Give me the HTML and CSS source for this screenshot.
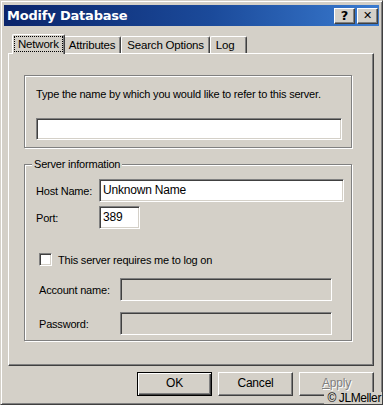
FILE: index.html
```html
<!DOCTYPE html>
<html lang="en">
  <head>
    <meta charset="UTF-8" />
    <meta name="viewport" content="width=device-width, initial-scale=1.0" />
    <title>Modify Database</title>
    <link rel="stylesheet" href="styles.css">
  </head>
  <body>
    <div class="window">
      <div class="titlebar">
        <span class="title">Modify Database</span>
        <div class="title-buttons">
          <div class="tbtn">?</div>
          <div class="tbtn close">&#x2715;</div>
        </div>
      </div>

      <div class="content">
        <div class="tabs">
          <div class="tab active"><span class="focus">Network</span></div>
          <div class="tab">Attributes</div>
          <div class="tab">Search Options</div>
          <div class="tab log">Log</div>
        </div>

        <div class="panel">
          <div class="group intro">
            <p>Type the name by which you would like to refer to this server.</p>
            <div class="field wide"></div>
          </div>

          <fieldset class="group server">
            <legend>Server information</legend>
            <div class="row host">
              <label class="label-short">Host Name:</label>
              <div class="field host-field">Unknown Name</div>
            </div>
            <div class="row port">
              <label class="label-short">Port:</label>
              <div class="field port-field">389</div>
            </div>
            <div class="row check">
              <span class="checkbox"></span>
              <span>This server requires me to log on</span>
            </div>
            <div class="row account">
              <label class="label-long">Account name:</label>
              <div class="field disabled"></div>
            </div>
            <div class="row password">
              <label class="label-long">Password:</label>
              <div class="field disabled"></div>
            </div>
          </fieldset>
        </div>

        <div class="actions">
          <div class="btn default">OK</div>
          <div class="btn">Cancel</div>
          <div class="btn off"><u>A</u>pply</div>
        </div>
      </div>

      <div class="credit">&copy; JLMeller</div>
    </div>
  </body>
</html>
```

FILE: styles.css
```css
body {
  margin: 0;
  background: #d4d0c8;
}

.window {
  position: relative;
  width: 383px;
  height: 405px;
  box-sizing: border-box;
  overflow: hidden;
  background: #d4d0c8;
  border: 1px solid;
  border-color: #d4d0c8 #404040 #404040 #d4d0c8;
  box-shadow: inset 1px 1px #fff, inset -1px -1px #808080;
  padding: 4px 3px 0 3px;
  font-family: "Liberation Sans", Arial, sans-serif;
  font-size: 11px;
  letter-spacing: -0.2px;
  color: #000;
}

.titlebar {
  display: flex;
  align-items: center;
  justify-content: space-between;
  height: 21px;
  padding: 0 1px 0 3px;
  background: linear-gradient(to right, #0a246a 0%, #1b4a9a 55%, #3a7bd0 100%);
}

.title {
  color: #fff;
  font-family: "DejaVu Sans", sans-serif;
  font-weight: bold;
  font-size: 13px;
  letter-spacing: -0.2px;
}

.title-buttons {
  display: flex;
  gap: 2px;
}

.tbtn {
  width: 21px;
  height: 16px;
  box-sizing: border-box;
  background: #d4d0c8;
  border: 1px solid;
  border-color: #fff #404040 #404040 #fff;
  box-shadow: inset -1px -1px #808080;
  font-family: "DejaVu Sans", sans-serif;
  font-weight: bold;
  font-size: 13px;
  line-height: 14px;
  text-align: center;
  letter-spacing: 0;
}

.tbtn.close {
  font-size: 11px;
}

.content {
  margin: 8px 0 0 4px;
  width: 366px;
}

.tabs {
  display: flex;
  align-items: flex-end;
  height: 19px;
  padding-left: 6px;
}

.tab {
  height: 17px;
  box-sizing: border-box;
  padding: 0 5px;
  line-height: 16px;
  font-size: 11.5px;
  border: 1px solid;
  border-bottom: none;
  border-color: #fff #404040 #fff #fff;
  box-shadow: inset -1px 0 #808080;
  border-radius: 2px 2px 0 0;
}

.tab.active {
  position: relative;
  z-index: 1;
  height: 20px;
  margin: 0 -2px -1px -2px;
  padding: 1px 1px 0 1px;
  background: #d4d0c8;
  line-height: 14px;
}

.tab.log {
  padding-right: 12px;
}

.focus {
  display: block;
  padding: 1px 4px 1px 4px;
  outline: 1px dotted #000;
  outline-offset: -1px;
}

.panel {
  width: 366px;
  height: 313px;
  box-sizing: border-box;
  border: 1px solid;
  border-color: #fff #404040 #404040 #fff;
  box-shadow: inset -1px -1px #808080;
  padding: 21px 0 0 15px;
}

.group {
  width: 328px;
  box-sizing: border-box;
  border: 1px solid #808080;
  box-shadow: inset 1px 1px #fff, 1px 1px #fff;
}

.intro {
  height: 73px;
  padding: 12px 0 0 11px;
}

.intro p {
  margin: 0;
  line-height: 13px;
}

.field {
  height: 23px;
  box-sizing: border-box;
  background: #fff;
  border: 1px solid;
  border-color: #808080 #fff #fff #808080;
  box-shadow: inset 1px 1px #404040, inset -1px -1px #d4d0c8;
  padding: 0 0 0 3px;
  line-height: 20px;
  font-size: 12px;
}

.wide {
  width: 306px;
  height: 22px;
  margin-top: 17px;
}

.server {
  margin: 10px 0 0 0;
  padding: 0 0 5px 11px;
}

.server legend {
  margin-left: -4px;
  padding: 0 2px;
  line-height: 13px;
  background: #d4d0c8;
}

.row {
  display: flex;
  align-items: center;
}

.host {
  margin-top: 8px;
}

.port {
  margin-top: 4px;
}

.check {
  margin-top: 24px;
  padding-left: 3px;
  height: 13px;
}

.account {
  margin-top: 12px;
  padding-left: 3px;
}

.password {
  margin-top: 11px;
  padding-left: 3px;
}

.label-short {
  width: 63px;
}

.label-long {
  width: 81px;
}

.host-field {
  width: 245px;
}

.port-field {
  width: 41px;
}

.field.disabled {
  width: 212px;
  background: #d4d0c8;
}

.checkbox {
  width: 13px;
  height: 13px;
  box-sizing: border-box;
  margin-right: 6px;
  background: #fff;
  border: 1px solid;
  border-color: #808080 #fff #fff #808080;
  box-shadow: inset 1px 1px #404040, inset -1px -1px #d4d0c8;
}

.actions {
  display: flex;
  justify-content: flex-end;
  gap: 6px;
  margin-top: 6px;
}

.btn {
  width: 75px;
  height: 24px;
  box-sizing: border-box;
  border: 1px solid;
  border-color: #fff #404040 #404040 #fff;
  box-shadow: inset -1px -1px #808080;
  text-align: center;
  line-height: 21px;
  font-size: 12px;
}

.btn.default {
  border: 1px solid #000;
  box-shadow: inset 1px 1px #fff, inset -1px -1px #404040, inset -2px -2px #808080;
}

.btn.off {
  color: #808080;
  text-shadow: 1px 1px #fff;
}

.credit {
  position: absolute;
  right: 0;
  bottom: 0;
  padding: 0 1px 0 3px;
  background: #d4d0c8;
  font-size: 12px;
  line-height: 12px;
  letter-spacing: -0.4px;
}
```
